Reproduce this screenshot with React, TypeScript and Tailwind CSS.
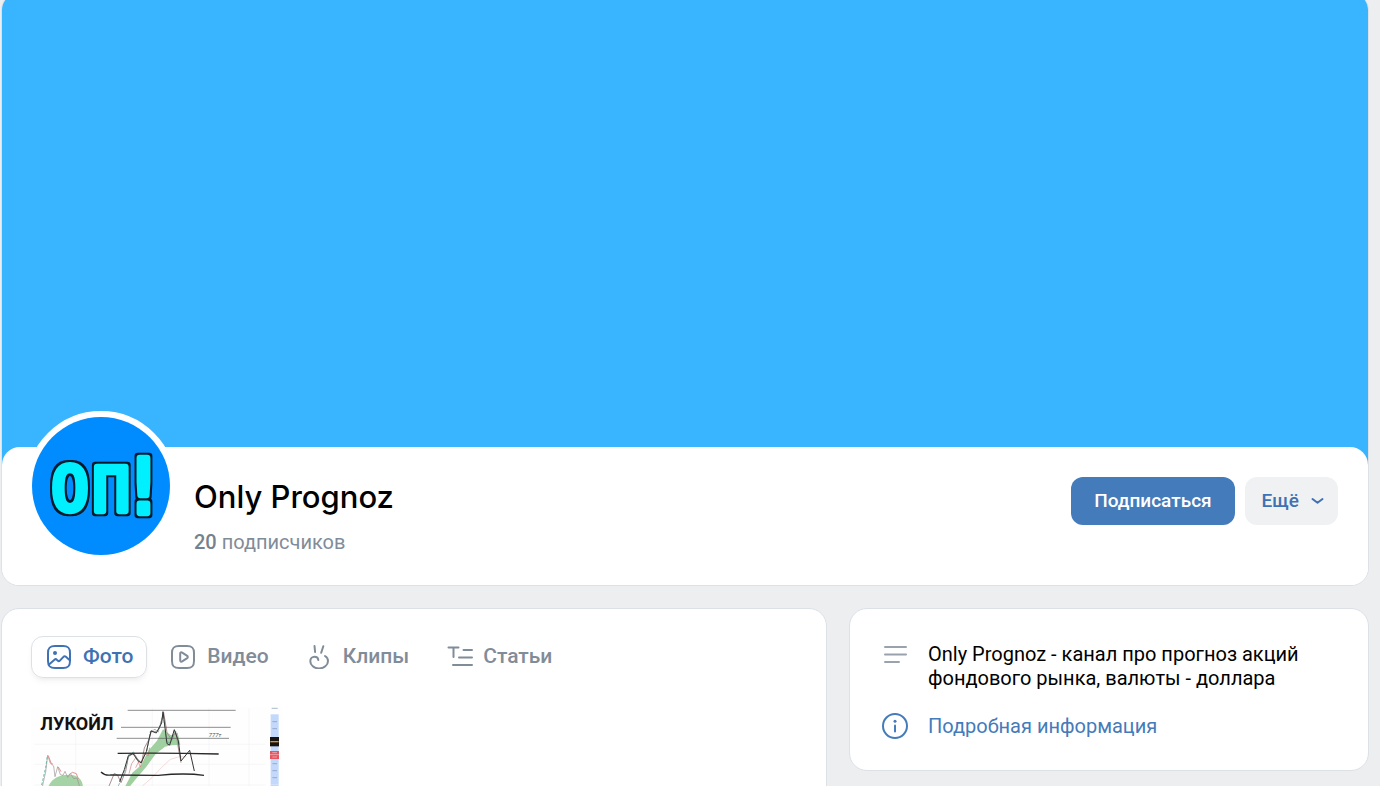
import React from 'react';

const tabs = [
    { id: 'photo', label: 'Фото', icon: <PhotoIcon />, active: true },
    { id: 'video', label: 'Видео', icon: <VideoIcon />, active: false },
    { id: 'clips', label: 'Клипы', icon: <ClipsIcon />, active: false },
    { id: 'articles', label: 'Статьи', icon: <ArticlesIcon />, active: false },
];

function PhotoIcon() {
    return (
        <svg className="w-6 h-6" viewBox="0 0 24 24" fill="none" stroke="currentColor" strokeWidth="2" strokeLinecap="round" strokeLinejoin="round" aria-hidden="true">
            <path d="M8 1h8c5.200 0 7 1.800 7 7v8c0 5.200-1.800 7-7 7H8c-5.200 0-7-1.800-7-7V8c0-5.200 1.800-7 7-7Z" />
            <path d="m2 19.500 5.500-4.800c.8-.7 1.600-.7 2.300 0l1.100 1c.6.6 1.400.5 2-.1l3.500-3.700c.7-.8 1.700-.8 2.500-.1l3.600 3.200" />
            <circle cx="8" cy="8" r="2" fill="currentColor" stroke="none" />
        </svg>
    );
}

function VideoIcon() {
    return (
        <svg className="w-6 h-6" viewBox="0 0 24 24" fill="none" stroke="currentColor" strokeWidth="2" strokeLinecap="round" strokeLinejoin="round" aria-hidden="true">
            <path d="M8 1h8c5.200 0 7 1.800 7 7v8c0 5.200-1.800 7-7 7H8c-5.200 0-7-1.800-7-7V8c0-5.200 1.800-7 7-7Z" />
            <path d="M9.200 8.700v6.600c0 1.200 1 1.700 2 1.100l5-3.300c.8-.6.800-1.600 0-2.200l-5-3.300c-1-.6-2-.1-2 1.100Z" />
        </svg>
    );
}

function ClipsIcon() {
    return (
        <svg className="w-6 h-6" viewBox="0 0 24 24" fill="none" stroke="currentColor" strokeWidth="2" strokeLinecap="round" strokeLinejoin="round" aria-hidden="true">
            <path d="m7.500 1 .6 6M16.300 1.200l-2.100 6.600" />
            <path d="M11.300 15c-.2-2-1.700-3.200-3.700-3.200-2.500 0-4.300 1.900-4.300 4.400 0 4.100 3.800 7.200 8.700 7.200s9-3.200 9-7.500c0-2-1.200-3.900-3-4.900" />
        </svg>
    );
}

function ArticlesIcon() {
    return (
        <svg className="w-[26px] h-6 -mr-[2px]" viewBox="0 0 26 24" fill="none" stroke="currentColor" strokeWidth="2" strokeLinecap="round" aria-hidden="true">
            <path d="M1.500 2.500h10M6.500 2.500v9.500M16.500 5H25M12 12.500h13M6 20h19" />
        </svg>
    );
}

function Avatar() {
    return (
        <svg className="block w-full h-full" viewBox="94 50 414 414" role="img" aria-label="Only Prognoz">
            <defs>
                {/* Dark marker outline round the letters */}
                <filter id="outline" x="-10%" y="-10%" width="120%" height="120%" colorInterpolationFilters="sRGB">
                    <feMorphology in="SourceAlpha" operator="dilate" radius="6" result="grown" />
                    <feGaussianBlur in="grown" stdDeviation="2" result="soft" />
                    <feFlood floodColor="#061a2c" />
                    <feComposite in2="soft" operator="in" result="edge" />
                    <feMerge>
                        <feMergeNode in="edge" />
                        <feMergeNode in="SourceGraphic" />
                    </feMerge>
                </filter>
            </defs>
            <rect x="94" y="50" width="414" height="414" fill="#008cff" />
            <text
                x="153"
                y="329"
                fill="#00f0ff"
                stroke="#00f0ff"
                strokeWidth="19"
                strokeLinejoin="round"
                fontFamily="'DejaVu Sans Mono', monospace"
                fontSize="182"
                filter="url(#outline)"
            >
                О<tspan x="277" y="333">П</tspan><tspan x="360" y="338" fontSize="226">!</tspan>
            </text>
        </svg>
    );
}

function ChartPhoto() {
    return (
        <svg className="block w-[252px] h-[150px]" viewBox="36 36 756 450" fill="none" role="img" aria-label="График Лукойл">
            <rect x="36" y="36" width="756" height="450" fill="#fefefe" />
            <path d="M46 148H740M46 208H740M170 40V480M400 40V480M570 40V480M690 40V480M46 270H740" stroke="#f3f3f3" strokeWidth="2" />
            {/* Cloud under the price line */}
            <path d="M88 275c10-26 34-36 62-36 26 0 42 14 42 40l-8 200H90Z" fill="#a5d3a5" />
            <path d="m318 275 22-42 26-22 22-44 26-30 18-34 24 18 20-8 8 36-26 2-20 4-28 22-28 38-34 40-16 20Z" fill="#a0d0a0" />
            <path d="m370 273 30-26 28-30 26-24 28-8 20 0" stroke="#f0c9c9" strokeWidth="2" />
            {/* Price action */}
            <path d="m70 275 10-44 6-50 8 24 10 8 4 32 8-30 8 24 8 2 6-12 8 18 8-12 10 16 10-2 8 26" stroke="#9b9292" strokeWidth="2" />
            <path d="m68 270 12-52 5-34" stroke="#66b8ab" strokeWidth="3" strokeDasharray="8 5" />
            <path d="m88 182 8 22 6 4M118 216l8 14M150 240l10-8 12 4 6 16" stroke="#e19090" strokeWidth="3" />
            <path d="m270 273 16-38 10 6 10 22 14-34 8-44 16-10 14 20 10 8 8-44 12-22 10-30 10 4 12-8 14-50 10 60 14 22 12-26 10 62 6 32" stroke="#aa8f8f" strokeWidth="3" />
            <path d="m298 273 24-58 8-38 14-6 12 26 10 6 18-36 10-58 14-6 10 8 14-50 6 40 4 40 14 2 10-38 12 32" stroke="#5f9e98" strokeWidth="2" strokeDasharray="10 4" />
            <path d="m330 236 8-30 14-20 12 30 12-40 12 6 4-24M350 218l10-20" stroke="#cd8080" strokeWidth="2" />
            <path d="m302 260 14-36 12-42 14-6 14 20 10 8 16-34 14-62 16 6 16-30 4-34 12 96 8 4 14-46 12 34 8 60 26-32 14 62" stroke="#343434" strokeWidth="3" strokeLinejoin="round" />
            {/* Levels */}
            <path d="M326 46H650M306 97H635M293 130H630" stroke="#555" strokeWidth="2" />
            <path d="M296 175q150-2 303 2M246 231q12 12 30 9l142 1q80-8 137 0" stroke="#292929" strokeWidth="4" />
            <text x="64" y="104" fill="#111" fontFamily="Roboto, sans-serif" fontWeight="700" fontSize="54">ЛУКОЙЛ</text>
            <text x="569" y="125" fill="#555" fontFamily="Roboto, sans-serif" fontStyle="italic" fontSize="18">777т</text>
            {/* Price scale */}
            <rect x="755" y="58" width="24" height="210" fill="#c3d9fb" />
            <path d="M758 40h18M760 80h14M760 101h14M760 206h14M760 227h14M760 248h14" stroke="#8296b5" strokeWidth="2" />
            <rect x="753" y="126" width="27" height="28" fill="#17130e" />
            <path d="M754 140h25" stroke="#d99332" strokeWidth="4" />
            <rect x="753" y="168" width="27" height="24" fill="#e55661" />
            <path d="M753 179h27M760 173h14M760 186h14" stroke="#f7c5cb" strokeWidth="2" />
            <rect x="755" y="268" width="24" height="210" fill="#c3d9fb" />
        </svg>
    );
}

const CommunityPage: React.FC = () => {
    return (
        <div className="h-screen overflow-hidden bg-[#edeef0] font-[Roboto,sans-serif] text-black">
            <div className="ml-px mr-[11px]">

                {/* Cover and header */}
                <header className="-mt-2 rounded-[18px] border border-[#dce1e6] bg-white overflow-hidden">
                    <div className="h-[472px] bg-[#39b4ff]" />
                    <div className="-mt-[18px] flex items-start gap-[18px] rounded-t-[18px] bg-white pl-6 pr-[30px] pb-6">
                        <div className="-mt-9 w-[150px] h-[150px] shrink-0 rounded-full border-[6px] border-white bg-white overflow-hidden">
                            <Avatar />
                        </div>
                        <div className="flex-1 pt-[30px]">
                            <h1 className="font-[Inter,sans-serif] text-[31px] leading-10 font-medium">Only Prognoz</h1>
                            <p className="mt-[13px] text-xl leading-6 text-[#818c99]">
                                <span className="font-medium text-[#76818e]">20</span> подписчиков
                            </p>
                        </div>
                        <div className="flex gap-[10px] pt-[30px]">
                            <button type="button" className="h-12 px-[23px] rounded-xl bg-[#447bba] text-white text-[19px] font-medium">
                                Подписаться
                            </button>
                            <button type="button" className="flex items-center gap-3 h-12 pl-[17px] pr-[14px] rounded-xl bg-[#eff1f3] text-[#3f72b3] text-[19px] font-medium">
                                Ещё
                                <svg className="w-[13px] h-2" viewBox="0 0 13 8" fill="none" stroke="currentColor" strokeWidth="2" strokeLinecap="round" strokeLinejoin="round" aria-hidden="true">
                                    <path d="m1.500 2 5 3.700 5-3.700" />
                                </svg>
                            </button>
                        </div>
                    </div>
                </header>

                <div className="mt-[22px] flex items-start gap-[22px]">
                    {/* Media */}
                    <main className="flex-1 rounded-[18px] border border-[#dce1e6] bg-white px-[29px] pt-[27px] pb-8">
                        <nav className="flex gap-2">
                            {tabs.map((tab) => (
                                <button
                                    key={tab.id}
                                    type="button"
                                    className={
                                        tab.active
                                            ? 'flex items-center gap-3 h-[42px] pl-[15px] pr-[13px] rounded-xl border border-[#dce1e6] shadow-md shadow-black/5 text-[21px] font-medium text-[#3f72b3]'
                                            : 'flex items-center gap-3 h-[42px] pl-[15px] pr-[13px] rounded-xl border border-transparent text-[21px] font-medium text-[#818c99]'
                                    }
                                >
                                    {tab.icon}
                                    {tab.label}
                                </button>
                            ))}
                        </nav>
                        <div className="mt-[29px]">
                            <ChartPhoto />
                        </div>
                    </main>

                    {/* About */}
                    <aside className="w-[520px] rounded-[18px] border border-[#dce1e6] bg-white px-[30px] pt-[33px] pb-[30px]">
                        <div className="flex gap-5">
                            <svg className="w-7 h-7 shrink-0" viewBox="0 0 28 28" fill="none" stroke="#99a2ad" strokeWidth="2" strokeLinecap="round" aria-hidden="true">
                                <path d="M5 5h21M5 12.500h21M5 20h14" />
                            </svg>
                            <p className="text-xl leading-6">
                                Only Prognoz - канал про прогноз акций фондового рынка, валюты - доллара
                            </p>
                        </div>
                        <a href="#info" className="mt-[22px] flex items-center gap-5 text-xl leading-6 text-[#447bba]">
                            <svg className="w-7 h-7 shrink-0" viewBox="0 0 28 28" fill="none" stroke="currentColor" strokeWidth="2" strokeLinecap="round" aria-hidden="true">
                                <circle cx="15" cy="14" r="12" />
                                <path d="M15 13.500v6" />
                                <circle cx="15" cy="9.300" r="1.500" fill="currentColor" stroke="none" />
                            </svg>
                            Подробная информация
                        </a>
                    </aside>
                </div>
            </div>
        </div>
    );
};

export default CommunityPage;
